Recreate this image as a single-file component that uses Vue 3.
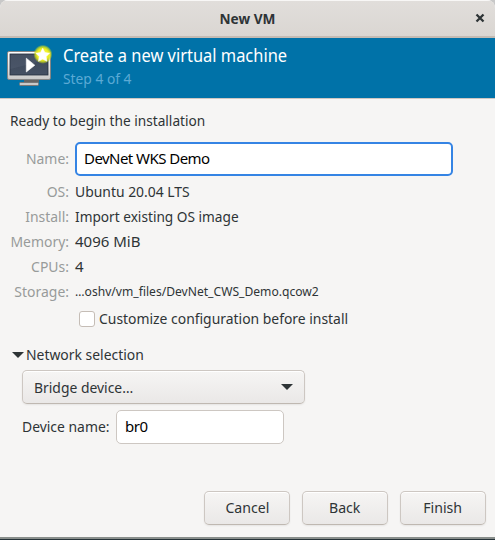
<script setup>
import { ref } from 'vue'

const name = ref('DevNet WKS Demo')
const device = ref('br0')
const customize = ref(false)
const details = [
  { label: 'OS:', value: 'Ubuntu 20.04 LTS', key: 'os' },
  { label: 'Install:', value: 'Import existing OS image', key: 'install' },
  { label: 'Memory:', value: '4096 MiB', key: 'memory' },
  { label: 'CPUs:', value: '4', key: 'cpus' },
  { label: 'Storage:', value: '…oshv/vm_files/DevNet_CWS_Demo.qcow2', key: 'storage' }
]
</script>

<template>
  <div class="screen">
    <div class="window">
      <header class="titlebar">
        <span class="title">New VM</span>
        <svg class="close" width="10" height="10" viewBox="0 0 10 10">
          <path d="M1.500 1.500 8.500 8.500M8.500 1.500 1.500 8.500" fill="none" stroke="#2e3436" stroke-width="2.300" />
        </svg>
      </header>

      <section class="banner">
        <svg class="vm-icon" width="48" height="48" viewBox="0 0 48 48">
          <defs>
            <linearGradient id="frame" x1="0" y1="0" x2="0" y2="1">
              <stop offset="0" stop-color="#ffffff" />
              <stop offset="0.7" stop-color="#dedede" />
              <stop offset="1" stop-color="#c8c8c8" />
            </linearGradient>
            <linearGradient id="glass" x1="0" y1="0" x2="0" y2="1">
              <stop offset="0" stop-color="#3c4656" />
              <stop offset="1" stop-color="#455164" />
            </linearGradient>
            <radialGradient id="glow">
              <stop offset="0" stop-color="#fffb70" />
              <stop offset="0.6" stop-color="#eef01c" />
              <stop offset="0.8" stop-color="#d3e01c" stop-opacity="0.75" />
              <stop offset="1" stop-color="#b0d020" stop-opacity="0" />
            </radialGradient>
          </defs>
          <path d="M19 34.500h15v3H19z" fill="#656565" />
          <rect x="14.500" y="37.500" width="19" height="3" rx="1" fill="#c9c9c9" stroke="#777" />
          <rect x="2.500" y="6.500" width="43" height="28" rx="1.500" fill="url(#frame)" stroke="#858585" />
          <rect x="5" y="9" width="38" height="21" fill="url(#glass)" stroke="#252e3d" stroke-width="0.800" />
          <path d="M5.500 9.500h37v5L5.500 24z" fill="#596577" opacity="0.350" />
          <path d="M21.300 13.200 29.800 20.200 21.300 27z" fill="#fff" stroke="#fff" stroke-width="0.600" />
          <circle cx="37.900" cy="9.300" r="9.600" fill="url(#glow)" />
          <path d="m37.700 3.300 2.100 4.300 4.700.7-3.400 3.300.8 4.700-4.200-2.200-4.200 2.200.8-4.700-3.400-3.300 4.700-.7z" fill="#fff" stroke="#fff" stroke-width="0.600" stroke-linejoin="round" />
        </svg>
        <div class="headings">
          <h1>Create a new virtual machine</h1>
          <p>Step 4 of 4</p>
        </div>
      </section>

      <main class="content">
        <p class="ready">Ready to begin the installation</p>
        <div class="row name-row">
          <span class="label">Name:</span>
          <input v-model="name" class="entry name-entry" type="text">
        </div>
        <div v-for="item in details" :key="item.key" class="row">
          <span class="label">{{ item.label }}</span>
          <span class="value" :class="item.key">{{ item.value }}</span>
        </div>
        <label class="customize">
          <input v-model="customize" type="checkbox">
          <span class="narrow">Customize configuration before install</span>
        </label>

        <div class="expander">
          <svg width="12" height="6" viewBox="0 0 12 6"><path d="M0 0h12L6 6z" fill="#2e3436" /></svg>
          <span class="narrow">Network selection</span>
        </div>
        <button class="combo" type="button">
          <span class="narrow">Bridge device…</span>
          <svg width="12" height="6" viewBox="0 0 12 6"><path d="M0 0h12L6 6z" fill="#2e3436" /></svg>
        </button>
        <div class="device-row">
          <span class="device-label narrow">Device name:</span>
          <input v-model="device" class="entry device-entry" type="text">
        </div>
      </main>

      <footer class="actions">
        <button type="button"><span>Cancel</span></button>
        <button type="button"><span>Back</span></button>
        <button type="button"><span>Finish</span></button>
      </footer>
    </div>
  </div>
</template>

<style>
body { margin: 0; }
</style>

<style scoped>
* { box-sizing: border-box; }
.screen { width: 495px; height: 540px; background: linear-gradient(#c8c8c8 0 50%, #263238 50%); overflow: hidden; }
.window {
  display: flex; flex-direction: column; width: 495px; height: 539px;
  background: #f6f5f4; border-bottom: 2px solid #898e8b; border-radius: 8px 8px 0 0; overflow: hidden;
  color: #2e3436; font: 15px/25px "Noto Sans", sans-serif;
  white-space: nowrap;
}
h1, p { margin: 0; font-weight: 400; }
.titlebar {
  display: grid; grid-template-columns: 1fr auto 1fr; align-items: center;
  height: 38px; flex: none; border-top: 1px solid #f8f7f6; border-bottom: 2px solid #c4bbb3;
  background: linear-gradient(#e1dedb, #dad6d2); padding: 0 10px 1px 0;
}
.title { grid-column: 2; font-weight: 700; font-size: 14.5px; padding-left: 10px; transform: scaleX(.94); }
.close { justify-self: end; }
.banner { display: flex; height: 61px; flex: none; background: #0072a8; border-bottom: 1px solid #cdc7c2; padding: 7px 0 0 5px; }
.vm-icon { flex: none; }
.headings { padding-left: 10px; margin-top: -1px; }
h1 { font-size: 17.500px; line-height: 23px; color: #fff; transform: scaleX(.939); transform-origin: left; }
.headings p { width: max-content; line-height: 23px; color: #5caad5; transform: scaleX(.92); transform-origin: left; }
.content { display: flex; flex-direction: column; padding: 9px 0 0 10px; }
.ready { height: 25px; transform: scaleX(.911); transform-origin: left; }
.row { display: flex; height: 25px; gap: 6px; }
.name-row { height: 34px; line-height: 32px; margin: 9px 0 3px; }
.label { display: flex; justify-content: flex-end; width: 59px; color: #989b9a; flex: none; transform: scaleX(.93); transform-origin: right; }
.value, .narrow { transform: scaleX(.927); transform-origin: left; }
.value.install { transform: scaleX(.911); }
.value.memory, .value.cpus { transform: none; }
.value.storage { font-size: 12.500px; transform: scaleX(.968); }
.entry {
  height: 34px; font: inherit; color: #000; background: #fff; border: 1px solid #cdc7c2;
  border-radius: 5px; outline: none; padding: 0 8px 2px;
}
.name-entry { width: 378px; border: 2px solid #3584e4; padding: 0 7px 2px; letter-spacing: -.55px; }
.device-entry { width: 168px; letter-spacing: -.4px; }
.customize { display: flex; align-items: center; height: 25px; margin-left: 69px; margin-top: 2px; }
.customize input { appearance: none; width: 16px; height: 16px; margin: 0 4px 0 0; border: 1px solid #c5bdb6; border-radius: 3px; background: #fff; }
.expander { display: flex; align-items: center; gap: 2px; height: 25px; margin: 11px 0 3px 2px; }
.combo, .actions button {
  height: 34px; border: 1px solid #cdc7c2; border-bottom-color: #bfb8b1; border-radius: 5px;
  background: linear-gradient(#f6f5f4, #eae8e7); box-shadow: inset 0 1px #fff, 0 1px 2px rgba(0, 0, 0, .07);
  color: #2e3436; font: inherit; padding: 0 0 2px;
}
.actions span { display: inline-block; transform: scaleX(.94); }
.combo { display: flex; align-items: center; justify-content: space-between; width: 283px; margin-left: 12px; padding: 0 11px; }
.device-row { display: flex; align-items: center; margin: 6px 0 0 12px; }
.device-label { width: 94px; margin-top: -2px; }
.device-entry { flex: none; }
.actions { display: flex; justify-content: flex-end; gap: 12px; margin-top: auto; padding: 0 9px 12px 0; }
.actions button { width: 86px; }
</style>
